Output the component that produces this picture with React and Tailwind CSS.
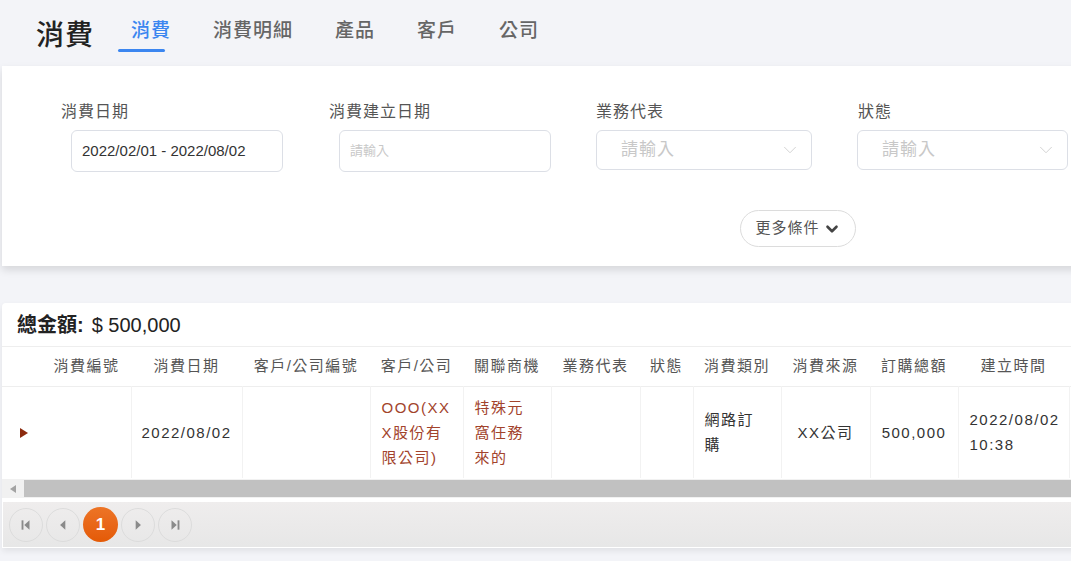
import { ChevronDown } from 'lucide-react';

const FONT = { fontFamily: '"Liberation Sans", "Noto Sans CJK TC", sans-serif' };

const TABS = ['消費', '消費明細', '產品', '客戶', '公司'];

const COLUMNS = [
  { key: 'expand', label: '', width: 40 },
  { key: 'no', label: '消費編號', width: 89 },
  { key: 'date', label: '消費日期', width: 111 },
  { key: 'custNo', label: '客戶/公司編號', width: 128 },
  { key: 'cust', label: '客戶/公司', width: 93 },
  { key: 'opp', label: '關聯商機', width: 88 },
  { key: 'rep', label: '業務代表', width: 89 },
  { key: 'status', label: '狀態', width: 53 },
  { key: 'type', label: '消費類別', width: 88 },
  { key: 'source', label: '消費來源', width: 89 },
  { key: 'total', label: '訂購總額', width: 88 },
  { key: 'created', label: '建立時間', width: 111 },
  { key: 'extra', label: '', width: 111 },
];

const Lines = ({ lines }) => (
  <div className="text-left">
    {lines.map((l) => (
      <div key={l}>{l}</div>
    ))}
  </div>
);

// Pagination glyphs
const PagerIcon = ({ type }) => (
  <svg width="14" height="14" viewBox="0 0 12 12" fill="#8a8a8a">
    {type === 'first' && (
      <>
        <rect x="2.2" y="2" width="1.6" height="8" />
        <polygon points="9,2 9,10 4.5,6" />
      </>
    )}
    {type === 'prev' && <polygon points="8,2 8,10 3.5,6" />}
    {type === 'next' && <polygon points="4,2 4,10 8.5,6" />}
    {type === 'last' && (
      <>
        <polygon points="3,2 3,10 7.5,6" />
        <rect x="8.2" y="2" width="1.6" height="8" />
      </>
    )}
  </svg>
);

const PagerButton = ({ type }) => (
  <button
    type="button"
    className="w-[34px] h-[34px] rounded-full border border-[#dcdcdc] flex items-center justify-center"
  >
    <PagerIcon type={type} />
  </button>
);

const TextInput = ({ value, placeholder, width }) => (
  <div
    className="h-[42px] border border-[#dcdfe6] rounded-[6px] bg-white flex items-center px-[10px]"
    style={{ width }}
  >
    {value ? (
      <span className="text-[15px] text-[#333]">{value}</span>
    ) : (
      <span className="text-[13px] text-[#c8c8c8]">{placeholder}</span>
    )}
  </div>
);

const SelectInput = ({ width }) => (
  <div
    className="h-[40px] border border-[#dcdfe6] rounded-[6px] bg-white flex items-center justify-between pl-[24px] pr-[10px] mt-[1px]"
    style={{ width }}
  >
    <span className="text-[17px] text-[#c8c8c8] tracking-[1px]">請輸入</span>
    <ChevronDown size={22} strokeWidth={1} className="text-[#cfcfcf]" />
  </div>
);

export default function App() {
  return (
    <div className="w-full min-h-[561px] bg-[#f3f4f8] overflow-hidden" style={FONT}>
      {/* Header */}
      <div className="h-[66px] flex items-start pt-[18px] pl-[36px]">
        <div className="text-[28px] leading-[36px] font-medium text-[#222] tracking-[1px]">消費</div>
        <div className="flex gap-[42px] ml-[37px]">
          {TABS.map((t, i) => (
            <div key={t} className="flex flex-col">
              <span
                className={`text-[19px] leading-[26px] tracking-[1px] font-medium ${
                  i === 0 ? 'text-[#3b86f0]' : 'text-[#666]'
                }`}
              >
                {t}
              </span>
              {i === 0 && <div className="mt-[5px] -ml-[13px] w-[47px] h-[3px] rounded-full bg-[#3b86f0]" />}
            </div>
          ))}
        </div>
      </div>

      {/* Filter card */}
      <div className="ml-[2px] w-[1120px] h-[200px] bg-white shadow-[0_4px_8px_rgba(0,0,0,0.12)] pt-[34px]">
        <div className="flex">
          <div className="w-[327px] pl-[59px]">
            <div className="text-[16px] leading-[24px] text-[#555] tracking-[1px]">消費日期</div>
            <div className="mt-[6px] ml-[10px]">
              <TextInput value="2022/02/01 - 2022/08/02" width={212} />
            </div>
          </div>
          <div className="w-[267px]">
            <div className="text-[16px] leading-[24px] text-[#555] tracking-[1px]">消費建立日期</div>
            <div className="mt-[6px] ml-[10px]">
              <TextInput placeholder="請輸入" width={212} />
            </div>
          </div>
          <div className="w-[261px]">
            <div className="text-[16px] leading-[24px] text-[#555] tracking-[1px]">業務代表</div>
            <div className="mt-[6px]">
              <SelectInput width={216} />
            </div>
          </div>
          <div>
            <div className="text-[16px] leading-[24px] text-[#555] tracking-[1px] pl-[1px]">狀態</div>
            <div className="mt-[6px]">
              <SelectInput width={211} />
            </div>
          </div>
        </div>
        <div className="mt-[38px] ml-[738px]">
          <button
            type="button"
            className="h-[37px] w-[116px] rounded-full border border-[#dcdcdc] flex items-center justify-center gap-[3px]"
          >
            <span className="text-[15px] text-[#555] tracking-[1px]">更多條件</span>
            <ChevronDown size={18} strokeWidth={3.5} className="text-[#444]" />
          </button>
        </div>
      </div>

      {/* Table card */}
      <div className="mt-[37px] ml-[2px] w-[1120px] bg-white rounded-t-[4px] shadow-[0_3px_6px_rgba(0,0,0,0.08)] overflow-hidden">
        <div className="h-[44px] flex items-center pl-[15px] border-b border-[#eeeeee] text-[20px] text-[#222]">
          <span className="font-bold">總金額:</span>
          <span className="ml-[8px]">$ 500,000</span>
        </div>
        <table className="table-fixed border-collapse text-[15px] tracking-[1.5px]" style={{ width: 1178 }}>
          <colgroup>
            {COLUMNS.map((c) => (
              <col key={c.key} style={{ width: c.width }} />
            ))}
          </colgroup>
          <thead>
            <tr className="h-[39px] border-b border-[#eeeeee]">
              {COLUMNS.map((c) => (
                <th key={c.key} className="font-normal text-[#555] text-center whitespace-nowrap p-0">
                  {c.label}
                </th>
              ))}
            </tr>
          </thead>
          <tbody>
            <tr className="h-[92px] text-[#333] leading-[25px]">
              <td className="p-0 pl-[18px]">
                <svg width="8" height="10" viewBox="0 0 8 10" className="mt-[2px]">
                  <polygon points="0,0 8,5 0,10" fill="#8c2a0e" />
                </svg>
              </td>
              <td className="p-0" />
              <td className="p-0 text-center border-l border-[#f2f2f2]">2022/08/02</td>
              <td className="p-0 border-l border-[#f2f2f2]" />
              <td className="px-[11px] border-l border-[#f2f2f2] text-[#a2432c]">
                <Lines lines={['OOO(XX', 'X股份有', '限公司)']} />
              </td>
              <td className="px-[11px] border-l border-[#f2f2f2] text-[#a2432c]">
                <Lines lines={['特殊元', '窩任務', '來的']} />
              </td>
              <td className="p-0 border-l border-[#f2f2f2]" />
              <td className="p-0 border-l border-[#f2f2f2]" />
              <td className="px-[11px] border-l border-[#f2f2f2]">
                <Lines lines={['網路訂', '購']} />
              </td>
              <td className="p-0 text-center border-l border-[#f2f2f2]">XX公司</td>
              <td className="p-0 text-center border-l border-[#f2f2f2]">500,000</td>
              <td className="px-[11px] border-l border-[#f2f2f2]">
                <Lines lines={['2022/08/02', '10:38']} />
              </td>
              <td className="p-0 border-l border-[#f2f2f2]" />
            </tr>
          </tbody>
        </table>

        {/* Scrollbar */}
        <div className="mt-[1px] h-[19px] flex bg-[#f1f1f1] pt-[1px]">
          <div className="w-[22px] flex items-center justify-center">
            <svg width="6" height="8" viewBox="0 0 6 8">
              <polygon points="6,0 6,8 0,4" fill="#a3a3a3" />
            </svg>
          </div>
          <div className="flex-1 h-[17px] bg-[#c1c1c1]" />
        </div>

        {/* Pagination */}
        <div className="mt-[3px] h-[47px] border border-white bg-gradient-to-b from-[#efeded] to-[#e7e7e7] flex items-center pl-[6px] gap-[3px]">
          <PagerButton type="first" />
          <PagerButton type="prev" />
          <button
            type="button"
            className="w-[35px] h-[35px] rounded-full bg-gradient-to-b from-[#ed7425] to-[#e45a05] text-white font-bold text-[17px] flex items-center justify-center"
          >
            1
          </button>
          <PagerButton type="next" />
          <PagerButton type="last" />
        </div>
      </div>
    </div>
  );
}
